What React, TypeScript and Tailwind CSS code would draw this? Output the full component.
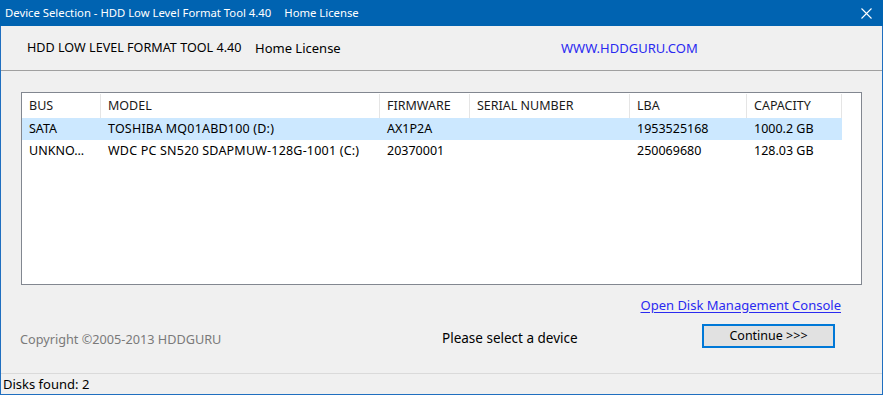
import React from 'react';

const COLUMNS = [
  { key: 'bus', label: 'BUS', width: 'w-[79px]' },
  { key: 'model', label: 'MODEL', width: 'w-[279px]' },
  { key: 'firmware', label: 'FIRMWARE', width: 'w-[90px]' },
  { key: 'serial', label: 'SERIAL NUMBER', width: 'w-[160px]' },
  { key: 'lba', label: 'LBA', width: 'w-[117px]' },
  { key: 'capacity', label: 'CAPACITY', width: 'w-[95px]' },
];

const DEVICES = [
  { bus: 'SATA', model: 'TOSHIBA MQ01ABD100 (D:)', firmware: 'AX1P2A', serial: '', lba: '1953525168', capacity: '1000.2 GB', selected: true },
  { bus: 'UNKNO...', model: 'WDC PC SN520 SDAPMUW-128G-1001 (C:)', firmware: '20370001', serial: '', lba: '250069680', capacity: '128.03 GB', selected: false },
];

const CloseIcon = () => (
  <svg width="11" height="11" viewBox="0 0 11 11" className="block">
    <path d="M0.5 0.5 L10.5 10.5 M10.5 0.5 L0.5 10.5" stroke="white" strokeWidth="1.1" fill="none" />
  </svg>
);

export default function App() {
  return (
    <div className="w-[883px] h-[395px] flex flex-col bg-[#f0f0f0] text-[12px] text-[#000] font-['Noto_Sans','DejaVu_Sans',sans-serif] leading-none whitespace-nowrap overflow-hidden">
      {/* title bar */}
      <div className="h-[26px] shrink-0 bg-[#0063b1] flex items-center justify-between pl-[5px] pr-[11px] text-white text-[11.3px]">
        <div className="flex items-center">
          <span>Device Selection - HDD Low Level Format Tool 4.40</span>
          <span className="ml-[13px]">Home License</span>
        </div>
        <CloseIcon />
      </div>

      <div className="flex-1 flex flex-col border-x border-b border-[#1f6fc0]">
        {/* header */}
        <div className="h-[44px] shrink-0 flex items-center pl-[26px] text-[13px] text-[#000]">
          <span className="w-[228px] shrink-0 text-[12.6px]">HDD LOW LEVEL FORMAT TOOL 4.40</span>
          <span className="w-[306px] shrink-0">Home License</span>
          <span className="text-[#2a2af0]">WWW.HDDGURU.COM</span>
        </div>
        <div className="h-px shrink-0 bg-[#a0a0a0]" />

        {/* device list */}
        <div className="ml-[20px] mt-[21px] w-[841px] h-[193px] shrink-0 border border-[#828790] bg-white text-[12.5px]">
          <div className="h-[25px] flex">
            {COLUMNS.map((c) => (
              <div key={c.key} className={`${c.width} h-[24px] mt-px flex items-center pl-[7px] border-r border-[#e5e5e5] text-[#1a1a1a]`}>
                {c.label}
              </div>
            ))}
          </div>
          {DEVICES.map((d) => (
            <div key={d.model} className={`h-[22px] w-[820px] flex items-center ${d.selected ? 'bg-[#cce8ff]' : ''}`}>
              <div className="w-[79px] pl-[7px]">{d.bus}</div>
              <div className="w-[279px] pl-[7px] tracking-[0.2px]">{d.model}</div>
              <div className="w-[90px] pl-[7px]">{d.firmware}</div>
              <div className="w-[160px] pl-[7px]">{d.serial}</div>
              <div className="w-[117px] pl-[7px]">{d.lba}</div>
              <div className="w-[95px] pl-[7px]">{d.capacity}</div>
            </div>
          ))}
        </div>

        {/* link */}
        <div className="h-[22px] mt-[9px] shrink-0 flex items-center justify-end pr-[41px] text-[13px]">
          <span className="text-[#2a2af0] underline underline-offset-2">Open Disk Management Console</span>
        </div>

        {/* bottom row */}
        <div className="h-[24px] mt-[11px] shrink-0 flex items-center text-[13.5px]">
          <span className="ml-[19px] w-[422px] shrink-0 text-[#7a7a7a] text-[12.7px]">Copyright ©2005-2013 HDDGURU</span>
          <span className="w-[260px] shrink-0">Please select a device</span>
          <button className="w-[133px] h-[24px] -mt-[6px] border-2 border-[#0078d7] bg-[#e1e1e1] flex items-center justify-center text-[#000] text-[12.5px]">
            Continue &gt;&gt;&gt;
          </button>
        </div>

        <div className="flex-1" />

        {/* status bar */}
        <div className="h-[21px] shrink-0 border-t border-[#dadada] flex items-center pl-[2px] text-[13px]">
          Disks found: 2
        </div>
      </div>
    </div>
  );
}
